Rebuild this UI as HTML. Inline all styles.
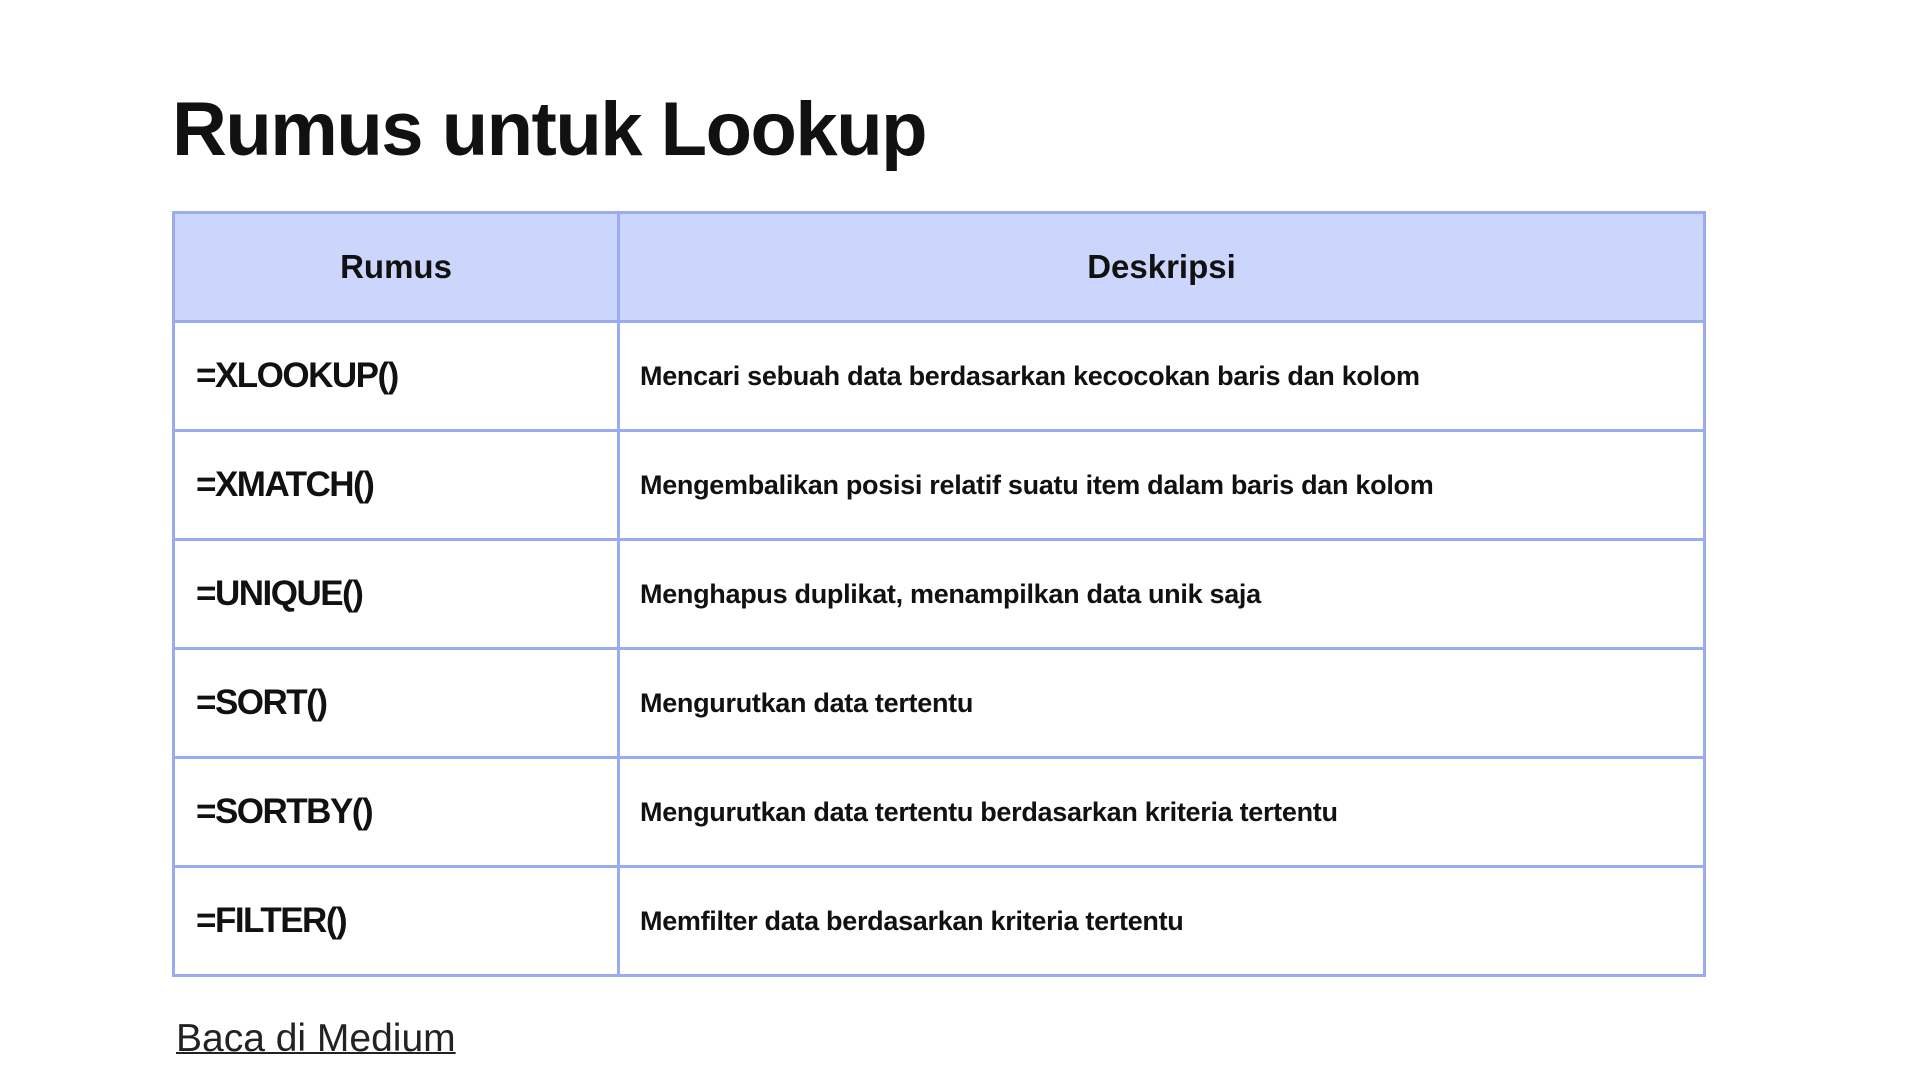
<!DOCTYPE html>
<html><head><meta charset="utf-8"><style>
html,body{margin:0;padding:0;background:#fff;width:1920px;height:1080px;overflow:hidden;font-family:"Liberation Sans",sans-serif;color:#111;}
h1{position:absolute;left:172px;top:92px;margin:0;font-size:76px;line-height:1;font-weight:bold;letter-spacing:-1.5px;}
table{position:absolute;left:172px;top:211px;width:1534px;border-collapse:collapse;}
td,th{border:3.5px solid #9aabf0;height:106px;padding:0;}
th{background:#ccd6fd;font-size:33px;font-weight:bold;text-align:center;height:106px;}
td.f{padding-left:21px;font-size:35px;font-weight:bold;letter-spacing:-1.5px;}
td.d{padding-left:20px;font-size:27px;font-weight:bold;letter-spacing:-0.3px;}
a{position:absolute;left:176px;top:1017px;font-size:39px;color:#222;text-decoration:underline;text-decoration-thickness:2px;}
</style></head><body>
<h1>Rumus untuk Lookup</h1>
<table>
<tr><th style="width:442px">Rumus</th><th>Deskripsi</th></tr>
<tr><td class="f">=XLOOKUP()</td><td class="d">Mencari sebuah data berdasarkan kecocokan baris dan kolom</td></tr>
<tr><td class="f">=XMATCH()</td><td class="d">Mengembalikan posisi relatif suatu item dalam baris dan kolom</td></tr>
<tr><td class="f">=UNIQUE()</td><td class="d">Menghapus duplikat, menampilkan data unik saja</td></tr>
<tr><td class="f">=SORT()</td><td class="d">Mengurutkan data tertentu</td></tr>
<tr><td class="f">=SORTBY()</td><td class="d">Mengurutkan data tertentu berdasarkan kriteria tertentu</td></tr>
<tr><td class="f">=FILTER()</td><td class="d">Memfilter data berdasarkan kriteria tertentu</td></tr>
</table>
<a>Baca di Medium</a>
</body></html>
